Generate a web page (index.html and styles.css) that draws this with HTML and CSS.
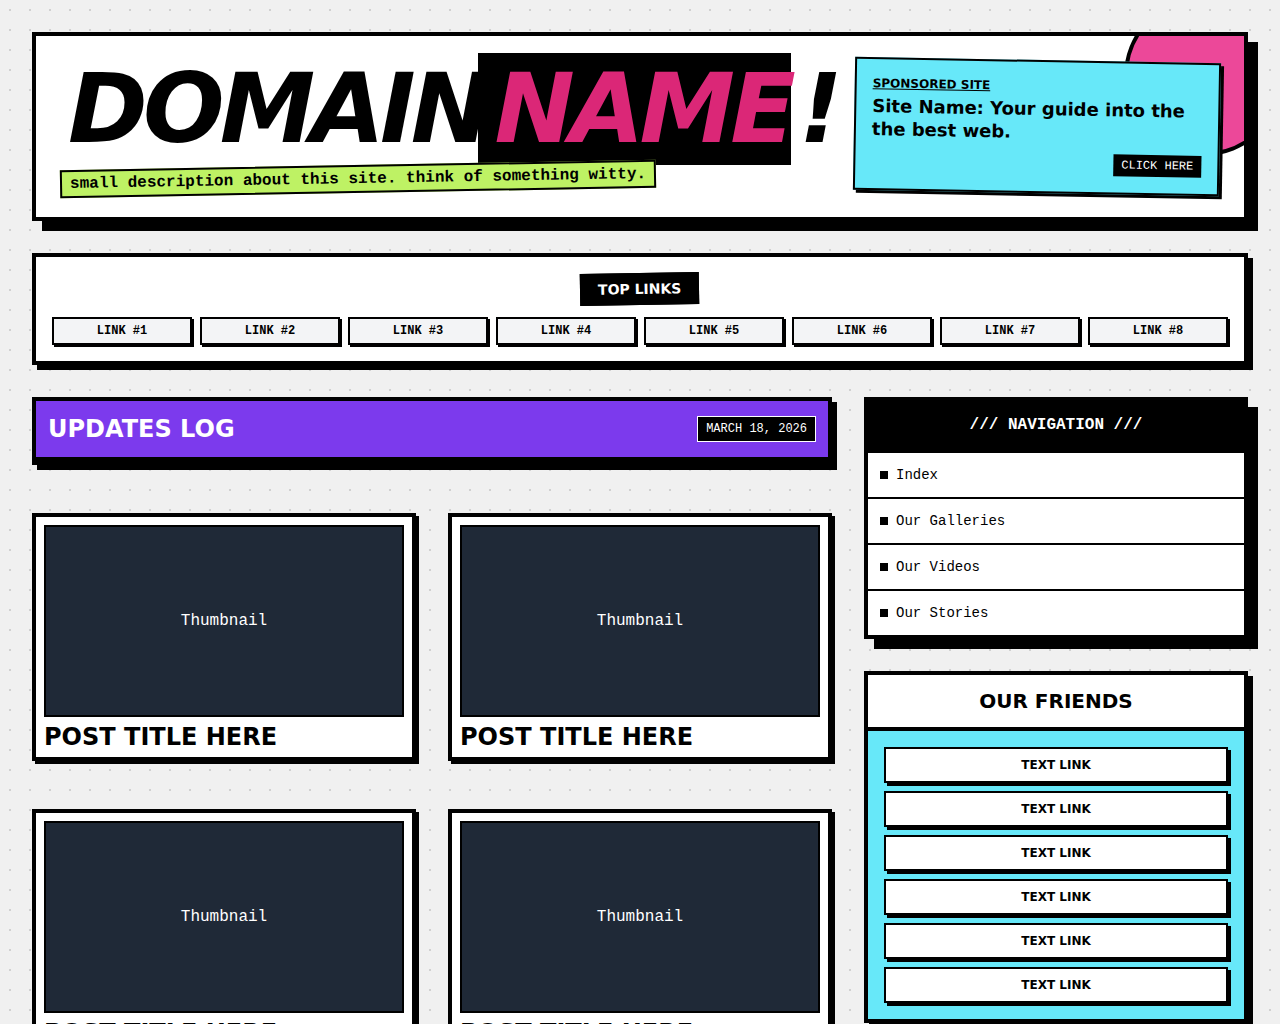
FILE: index.html
```html
<!DOCTYPE html>
<html lang="en">
<head>
  <meta charset="utf-8">
  <meta name="viewport" content="width=device-width, initial-scale=1">
  <title>DomainName!</title>
  <link rel="stylesheet" href="styles.css">
</head>
<body>
  <div class="page">
    <header class="masthead">
      <div class="masthead-disc"></div>
      <div class="brand">
        <h1 class="brand-title">DOMAIN<span class="brand-mark">NAME</span>!</h1>
        <p class="tagline">small description about this site. think of something witty.</p>
      </div>
      <aside class="sponsor">
        <h2 class="sponsor-label">SPONSORED SITE</h2>
        <p class="sponsor-text">Site Name: Your guide into the the best web.</p>
        <div class="sponsor-action"><a class="sponsor-link" href="#">CLICK HERE</a></div>
      </aside>
    </header>

    <section class="top-links">
      <h2 class="top-links-title">TOP LINKS</h2>
      <nav class="top-links-grid">
        <a class="top-link" href="#">LINK #1</a>
        <a class="top-link" href="#">LINK #2</a>
        <a class="top-link" href="#">LINK #3</a>
        <a class="top-link" href="#">LINK #4</a>
        <a class="top-link" href="#">LINK #5</a>
        <a class="top-link" href="#">LINK #6</a>
        <a class="top-link" href="#">LINK #7</a>
        <a class="top-link" href="#">LINK #8</a>
      </nav>
    </section>

    <div class="layout">
      <main class="content">
        <div class="log-bar">
          <h2 class="log-title">UPDATES LOG</h2>
          <span class="log-date">MARCH 18, 2026</span>
        </div>
        <div class="posts">
          <article class="post">
            <div class="thumb">Thumbnail</div>
            <h3 class="post-title">POST TITLE HERE</h3>
          </article>
          <article class="post">
            <div class="thumb">Thumbnail</div>
            <h3 class="post-title">POST TITLE HERE</h3>
          </article>
          <article class="post">
            <div class="thumb">Thumbnail</div>
            <h3 class="post-title">POST TITLE HERE</h3>
          </article>
          <article class="post">
            <div class="thumb">Thumbnail</div>
            <h3 class="post-title">POST TITLE HERE</h3>
          </article>
        </div>
      </main>

      <div class="sidebar">
        <nav class="side-nav">
          <h2 class="side-nav-title">/// NAVIGATION ///</h2>
          <ul class="side-nav-list">
            <li><a class="side-nav-link" href="#">Index</a></li>
            <li><a class="side-nav-link" href="#">Our Galleries</a></li>
            <li><a class="side-nav-link" href="#">Our Videos</a></li>
            <li><a class="side-nav-link" href="#">Our Stories</a></li>
          </ul>
        </nav>
        <section class="friends">
          <h2 class="friends-title">OUR FRIENDS</h2>
          <div class="friends-list">
            <a class="friend-link" href="#">TEXT LINK</a>
            <a class="friend-link" href="#">TEXT LINK</a>
            <a class="friend-link" href="#">TEXT LINK</a>
            <a class="friend-link" href="#">TEXT LINK</a>
            <a class="friend-link" href="#">TEXT LINK</a>
            <a class="friend-link" href="#">TEXT LINK</a>
          </div>
        </section>
      </div>
    </div>
  </div>
</body>
</html>
```

FILE: styles.css
```css
:root {
  --ink: #000;
  --paper: #fff;
  --cyan: #67e8f9;
  --display: "DejaVu Sans", sans-serif;
  --mono: "Liberation Mono", monospace;
}

*,
*::before,
*::after {
  box-sizing: border-box;
}

body {
  margin: 0;
  background-color: #f0f0f0;
  background-image: radial-gradient(#d0d0d0 1px, transparent 1px);
  background-size: 20px 20px;
  color: var(--ink);
  font-family: var(--mono);
  font-size: 16px;
  line-height: 24px;
}

h1,
h2,
h3,
p,
ul {
  margin: 0;
  padding: 0;
}

ul {
  list-style: none;
}

a {
  color: inherit;
  text-decoration: none;
}

.page {
  display: flex;
  flex-direction: column;
  gap: 32px;
  padding: 32px;
}

/* Masthead */

.masthead {
  position: relative;
  overflow: hidden;
  display: grid;
  grid-template-columns: minmax(0, 1fr) 366px;
  gap: 32px;
  padding: 24px;
  background: var(--paper);
  border: 4px solid var(--ink);
  box-shadow: 10px 10px 0 var(--ink);
}

.masthead-disc {
  position: absolute;
  top: -40px;
  right: -40px;
  width: 160px;
  height: 160px;
  background: #ec4899;
  border: 4px solid var(--ink);
  border-radius: 50%;
}

.brand {
  display: flex;
  flex-direction: column;
  align-items: flex-start;
  justify-content: center;
  gap: 8px;
}

.brand-title {
  padding-left: 8px;
  font-family: var(--display);
  font-size: 96px;
  font-style: italic;
  font-weight: 700;
  line-height: 96px;
  letter-spacing: -0.05em;
  white-space: nowrap;
}

/* The black block tucks under the slanted N before it */
.brand-mark {
  margin: 0 8px 0 -8px;
  padding-left: 16px;
  background: var(--ink);
  color: #db2777;
}

.tagline {
  padding: 0 8px;
  background: #bef264;
  border: 2px solid var(--ink);
  font-weight: 700;
  transform: rotate(-1deg);
}

.sponsor {
  position: relative;
  padding: 16px;
  background: var(--cyan);
  border: 2px solid var(--ink);
  box-shadow: 3px 3px 0 var(--ink);
  transform: rotate(1deg);
}

.sponsor-label {
  margin-bottom: 4px;
  font-family: var(--display);
  font-size: 12px;
  line-height: 16px;
  text-decoration: underline;
}

.sponsor-text {
  font-family: var(--display);
  font-size: 18px;
  font-weight: 700;
  line-height: 1.25;
}

.sponsor-action {
  margin-top: 8px;
  text-align: right;
}

.sponsor-link {
  padding: 4px 8px;
  background: var(--ink);
  color: var(--paper);
  font-size: 12px;
  line-height: 16px;
}

/* Top links */

.top-links {
  display: flex;
  flex-direction: column;
  align-items: center;
  gap: 12px;
  padding: 16px;
  background: var(--paper);
  border: 4px solid var(--ink);
  box-shadow: 5px 5px 0 var(--ink);
}

.top-links-title {
  padding: 4px 16px;
  background: var(--ink);
  border: 2px solid var(--ink);
  color: var(--paper);
  font-family: var(--display);
  font-size: 14px;
  line-height: 20px;
  transform: rotate(-1deg);
}

.top-links-grid {
  align-self: stretch;
  display: grid;
  grid-template-columns: repeat(8, minmax(0, 1fr));
  gap: 8px;
}

.top-link {
  padding: 4px;
  background: #f3f4f6;
  border: 2px solid var(--ink);
  box-shadow: 2px 2px 0 var(--ink);
  font-size: 12px;
  font-weight: 700;
  line-height: 16px;
  text-align: center;
}

/* Two-column body */

.layout {
  display: grid;
  grid-template-columns: repeat(12, minmax(0, 1fr));
  align-items: start;
  gap: 32px;
}

.content {
  grid-column: span 8;
  display: flex;
  flex-direction: column;
  gap: 48px;
}

.log-bar {
  display: flex;
  align-items: center;
  justify-content: space-between;
  padding: 12px;
  background: #7c3aed;
  border: 4px solid var(--ink);
  border-bottom-width: 8px;
  box-shadow: 5px 5px 0 var(--ink);
  color: var(--paper);
}

.log-title {
  font-family: var(--display);
  font-size: 24px;
  line-height: 32px;
}

.log-date {
  padding: 4px 8px;
  background: var(--ink);
  border: 1px solid var(--paper);
  font-size: 12px;
  line-height: 16px;
}

.posts {
  display: grid;
  grid-template-columns: repeat(2, minmax(0, 1fr));
  gap: 48px 32px;
}

.post {
  padding: 8px 8px 4px;
  background: var(--paper);
  border: 4px solid var(--ink);
  box-shadow: 3px 3px 0 var(--ink);
}

.thumb {
  display: flex;
  align-items: center;
  justify-content: center;
  height: 192px;
  background: #1f2937;
  border: 2px solid var(--ink);
  color: var(--paper);
}

.post-title {
  margin-top: 4px;
  font-family: var(--display);
  font-size: 24px;
  line-height: 32px;
}

/* Sidebar */

.sidebar {
  grid-column: span 4;
  display: flex;
  flex-direction: column;
  gap: 32px;
}

.side-nav {
  background: var(--paper);
  border: 4px solid var(--ink);
  box-shadow: 10px 10px 0 var(--ink);
}

.side-nav-title {
  padding: 12px;
  background: var(--ink);
  border-bottom: 4px solid var(--ink);
  color: var(--paper);
  font-size: 16px;
  line-height: 24px;
  text-align: center;
}

.side-nav-list li + li {
  border-top: 2px solid var(--ink);
}

.side-nav-link {
  display: flex;
  align-items: center;
  gap: 8px;
  padding: 12px;
  font-size: 14px;
  line-height: 20px;
}

.side-nav-link::before {
  content: "";
  width: 8px;
  height: 8px;
  background: var(--ink);
}

.friends {
  background: var(--cyan);
  border: 4px solid var(--ink);
  box-shadow: 5px 5px 0 var(--ink);
}

.friends-title {
  padding: 12px;
  background: var(--paper);
  border-bottom: 4px solid var(--ink);
  font-family: var(--display);
  font-size: 20px;
  line-height: 28px;
  text-align: center;
}

.friends-list {
  display: flex;
  flex-direction: column;
  gap: 8px;
  padding: 16px;
}

.friend-link {
  padding: 8px;
  background: var(--paper);
  border: 2px solid var(--ink);
  box-shadow: 3px 3px 0 var(--ink);
  font-family: var(--display);
  font-size: 12px;
  font-weight: 700;
  line-height: 16px;
  text-align: center;
}
```
